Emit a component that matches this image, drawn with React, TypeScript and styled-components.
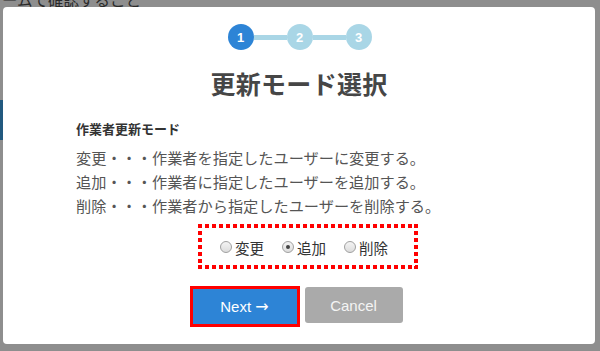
import React, { useState } from "react";
import styled, { createGlobalStyle } from "styled-components";

const GlobalStyle = createGlobalStyle`
  html, body {
    margin: 0;
    padding: 0;
    width: 600px;
    height: 351px;
    overflow: hidden;
  }
  body {
    font-family: "Noto Sans CJK JP", "Noto Sans", sans-serif;
  }
`;

const Screen = styled.div`
  position: relative;
  width: 600px;
  height: 351px;
  background: #8e8e8e;
  overflow: hidden;
`;

const BehindText = styled.div`
  padding-left: 2px;
  margin-top: -10px;
  font-size: 15.5px;
  color: #2a2a2a;
  line-height: 18px;
  white-space: nowrap;
`;

const BehindStripe = styled.div<{ $top: number; $color: string }>`
  position: absolute;
  left: 0;
  top: ${(p) => p.$top}px;
  width: 4px;
  height: 40px;
  background: ${(p) => p.$color};
`;

const Modal = styled.div`
  position: absolute;
  left: 3px;
  top: 7px;
  width: 592px;
  height: 337px;
  background: #fff;
  border-radius: 4px;
  display: flex;
  flex-direction: column;
  align-items: center;
  padding-top: 17px;
  box-sizing: border-box;
`;

const Steps = styled.div`
  display: flex;
  align-items: center;
  margin-left: 1px;
`;

const StepDot = styled.div<{ $active?: boolean }>`
  width: 26px;
  height: 26px;
  border-radius: 50%;
  background: ${(p) => (p.$active ? "#2d84d6" : "#a9d6e6")};
  color: #fff;
  font-family: "Liberation Sans", Arial, sans-serif;
  font-weight: bold;
  font-size: 13px;
  display: flex;
  align-items: center;
  justify-content: center;
`;

const StepLine = styled.div`
  width: 33px;
  height: 5px;
  background: #a9d6e6;
`;

const Title = styled.h1`
  margin: 16px 0 0 0;
  font-size: 25px;
  font-weight: bold;
  color: #464646;
  line-height: 34px;
  letter-spacing: 0.3px;
`;

const Body = styled.div`
  align-self: flex-start;
  margin-left: 73px;
  margin-top: 20px;
`;

const Subhead = styled.div`
  font-size: 13px;
  font-weight: bold;
  color: #333;
  line-height: 18px;
`;

const Desc = styled.div`
  margin-top: 7px;
  font-size: 15.2px;
  color: #555;
  line-height: 24px;
`;

const RadioBox = styled.div`
  margin-top: 7px;
  margin-left: 122px;
  width: 220px;
  height: 45px;
  box-sizing: border-box;
  display: flex;
  align-items: center;
  justify-content: flex-start;
  gap: 18px;
  padding: 1px 0 0 22px;
  background-image:
    repeating-linear-gradient(90deg, #f00 0 4px, transparent 4px 7px),
    repeating-linear-gradient(90deg, #f00 0 4px, transparent 4px 7px),
    repeating-linear-gradient(180deg, #f00 0 4px, transparent 4px 7px),
    repeating-linear-gradient(180deg, #f00 0 4px, transparent 4px 7px);
  background-size: 100% 4px, 100% 4px, 4px 100%, 4px 100%;
  background-position: 0 0, 0 100%, 0 0, 100% 0;
  background-repeat: no-repeat;
`;

const RadioLabel = styled.label`
  display: flex;
  align-items: center;
  gap: 3px;
  font-size: 14.5px;
  color: #333;
  cursor: pointer;
`;

const RadioMark = styled.span<{ $checked?: boolean }>`
  width: 10px;
  height: 10px;
  border-radius: 50%;
  border: 1px solid #a0a0a0;
  background: linear-gradient(#f4f4f4, #dcdcdc);
  display: flex;
  align-items: center;
  justify-content: center;
  &::after {
    content: "";
    width: 4px;
    height: 4px;
    border-radius: 50%;
    background: ${(p) => (p.$checked ? "#444" : "transparent")};
  }
`;

const Buttons = styled.div`
  margin-top: 17px;
  margin-left: -6px;
  display: flex;
  align-items: flex-start;
  gap: 5px;
`;

const NextButton = styled.button`
  width: 110px;
  height: 41px;
  border: 3px solid #f00;
  background: #2d84d6;
  color: #fff;
  font-family: "Liberation Sans", Arial, sans-serif;
  font-size: 15px;
  padding: 0;
  cursor: pointer;
`;

const Arrow = styled.span`
  font-family: "DejaVu Sans", sans-serif;
  font-size: 16px;
`;

const CancelButton = styled.button`
  margin-top: 1px;
  width: 98px;
  height: 36px;
  border: none;
  border-radius: 3px;
  background: #aaaaaa;
  color: #f4f4f4;
  font-family: "Liberation Sans", Arial, sans-serif;
  font-size: 15px;
  padding: 0;
  cursor: pointer;
`;

const modes = ["変更", "追加", "削除"];

export default function App() {
  const [mode, setMode] = useState("追加");

  return (
    <>
      <GlobalStyle />
      <Screen>
        <BehindText>ームで確認すること</BehindText>
        <BehindStripe $top={100} $color="#22597f" />
        <Modal>
          <Steps>
            <StepDot $active>1</StepDot>
            <StepLine />
            <StepDot>2</StepDot>
            <StepLine />
            <StepDot>3</StepDot>
          </Steps>
          <Title>更新モード選択</Title>
          <Body>
            <Subhead>作業者更新モード</Subhead>
            <Desc>
              変更・・・作業者を指定したユーザーに変更する。
              <br />
              追加・・・作業者に指定したユーザーを追加する。
              <br />
              削除・・・作業者から指定したユーザーを削除する。
            </Desc>
            <RadioBox>
              {modes.map((m) => (
                <RadioLabel key={m} onClick={() => setMode(m)}>
                  <RadioMark $checked={mode === m} />
                  {m}
                </RadioLabel>
              ))}
            </RadioBox>
          </Body>
          <Buttons>
            <NextButton>
              Next <Arrow>→</Arrow>
            </NextButton>
            <CancelButton>Cancel</CancelButton>
          </Buttons>
        </Modal>
      </Screen>
    </>
  );
}
